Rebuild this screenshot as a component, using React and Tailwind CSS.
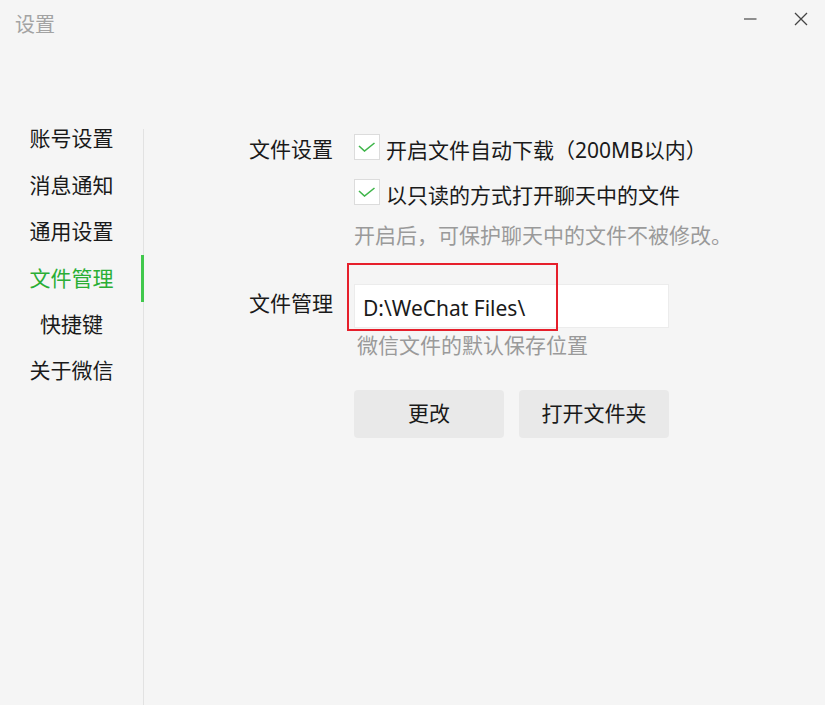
import React from "react";

const FONT = { fontFamily: '"Noto Sans", "Noto Sans CJK SC", sans-serif' };

const menu = ["账号设置", "消息通知", "通用设置", "文件管理", "快捷键", "关于微信"];

const Check = () => (
  <div className="w-[26px] h-[26px] shrink-0 bg-white border border-[#dcdcdc] flex items-center justify-center">
    <svg width="18" height="10" viewBox="0 0 18 10" fill="none">
      <path d="M1 4 L6.5 9 L16.5 1" stroke="#3fb54a" strokeWidth="1.6" />
    </svg>
  </div>
);

const App = () => {
  const active = "文件管理";

  return (
    <div className="w-[825px] h-[705px] bg-[#f5f5f5] flex flex-col overflow-hidden text-[#1a1a1a]" style={FONT}>
      {/* title bar */}
      <div className="h-[129px] shrink-0 flex items-start justify-between">
        <div className="pl-[15px] pt-[11px] text-[20px] leading-[28px] text-[#a3a3a3]">设置</div>
        <div className="flex items-center pt-[12px] pr-[17px] gap-[37px]">
          <svg width="14" height="14" viewBox="0 0 14 14">
            <path d="M1 7 H13.5" stroke="#555" strokeWidth="1.3" />
          </svg>
          <svg width="14" height="14" viewBox="0 0 14 14">
            <path d="M1 1 L13 13 M13 1 L1 13" stroke="#444" strokeWidth="1.3" />
          </svg>
        </div>
      </div>

      <div className="flex flex-1">
        {/* sidebar */}
        <div className="w-[144px] shrink-0 border-r border-[#e2e2e2]">
          <div className="-mt-[13px]">
            {menu.map((m) => (
              <div
                key={m}
                className={
                  "relative h-[46.4px] flex items-center justify-center text-[21px] " +
                  (m === active ? "text-[#2aae35]" : "text-[#1a1a1a]")
                }
              >
                {m}
                {m === active && <div className="absolute right-[-1px] top-0 bottom-0 w-[3px] bg-[#40c84c]" />}
              </div>
            ))}
          </div>
        </div>

        {/* content */}
        <div className="flex-1 pl-[105px] text-[21px]">
          <div className="flex items-center h-[26px] mt-[5px]">
            <div className="w-[105px] shrink-0 pt-[5px]">文件设置</div>
            <Check />
            <div className="ml-[6px] pt-[5px] leading-[26px]">开启文件自动下载（200MB以内）</div>
          </div>
          <div className="flex items-center h-[26px] mt-[19px] pl-[105px]">
            <Check />
            <div className="ml-[6px] pt-[5px] leading-[26px]">以只读的方式打开聊天中的文件</div>
          </div>
          <div className="h-[30px] mt-[15px] pl-[105px] leading-[30px] text-[#9a9a9a]">
            开启后，可保护聊天中的文件不被修改。
          </div>

          <div className="flex items-center h-[44px] mt-[34px]">
            <div className="w-[105px] shrink-0 -mt-[4px]">文件管理</div>
            <div className="relative w-[315px] h-[44px] bg-white border border-[#ececec] flex items-center pl-[8px]">
              <span className="text-[21px] leading-[26px] pt-[3px]">D:\WeChat Files\</span>
              <div className="absolute left-[-8px] top-[-22px] w-[211px] h-[68px] border-2 border-[#e61f2b]" />
            </div>
          </div>
          <div className="h-[30px] mt-[2px] pl-[108px] leading-[30px] text-[#9a9a9a]">微信文件的默认保存位置</div>

          <div className="flex gap-[15px] mt-[30px] pl-[105px]">
            <button className="w-[150px] h-[48px] rounded-[4px] bg-[#e9e9e9] text-[21px] text-[#1a1a1a]">更改</button>
            <button className="w-[150px] h-[48px] rounded-[4px] bg-[#e9e9e9] text-[21px] text-[#1a1a1a]">打开文件夹</button>
          </div>
        </div>
      </div>
    </div>
  );
};

export default App;
